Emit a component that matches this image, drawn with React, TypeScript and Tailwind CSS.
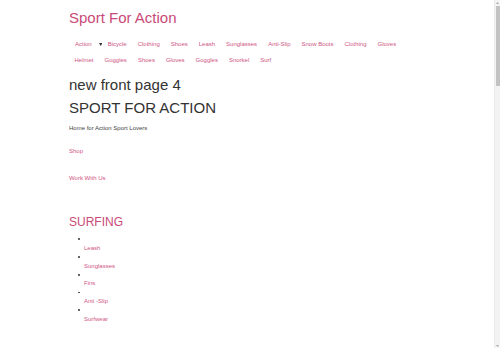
import React from "react";

const navRow1 = ["Bicycle", "Clothing", "Shoes", "Leash", "Sunglasses", "Anti-Slip", "Snow Boots", "Clothing", "Gloves"];
const navRow2 = ["Helmet", "Goggles", "Shoes", "Gloves", "Goggles", "Snorkel", "Surf"];
const surfing = ["Leash", "Sunglasses", "Fins", "Anti -Slip", "Surfwear"];

function NavItem({ label }: { label: string }) {
  return (
    <a href="#" className="px-[5.5px] leading-[16px] text-[#cf5583]">
      {label}
    </a>
  );
}

export default function App() {
  return (
    <div className="flex h-[348px] overflow-hidden bg-white font-['Liberation_Sans',Arial,sans-serif]">
      <main className="flex-1 overflow-hidden">
        <div className="ml-[69px] w-[356px]">
          {/* header */}
          <div className="pt-[8px] text-[15px] leading-[20px] text-[#c94a78]">Sport For Action</div>

          <nav className="mt-[8px] flex flex-wrap text-[6px]">
            <div className="flex items-center pl-[6px] leading-[16px]">
              <a href="#" className="text-[#cf5583]">Action</a>
              <svg className="ml-[7px]" width="3.5" height="3" viewBox="0 0 7 6">
                <path d="M0 0h7L3.5 6z" fill="#333" />
              </svg>
            </div>
            {navRow1.map((l, i) => (
              <NavItem key={"a" + i} label={l} />
            ))}
            {navRow2.map((l, i) => (
              <NavItem key={"b" + i} label={l} />
            ))}
          </nav>

          <h1 className="mt-[7.3px] text-[15px] leading-[20px] text-[#333]">new front page 4</h1>
          <h2 className="mt-[3px] text-[15px] leading-[20px] text-[#333]">SPORT FOR ACTION</h2>
          <p className="mt-[5.8px] text-[6px] leading-[9px] text-[#444]">Home for Action Sport Lovers</p>

          <a href="#" className="mt-[13.9px] block text-[6px] leading-[9px] text-[#cf5583]">Shop</a>
          <a href="#" className="mt-[18px] block text-[6px] leading-[9px] text-[#cf5583]">Work With Us</a>

          <h3 className="mt-[30.6px] text-[12px] leading-[16px] text-[#c94a78]">SURFING</h3>
          <ul className="mt-[5.2px]">
            {surfing.map((s) => (
              <li key={s} className="flex flex-col">
                <div className="flex h-[9px] items-center pl-[9.3px]">
                  <span className="h-[1.6px] w-[1.6px] rounded-full bg-[#333]" />
                </div>
                <a href="#" className="block pl-[15px] text-[6px] leading-[8.75px] text-[#cf5583]">
                  {s}
                </a>
              </li>
            ))}
          </ul>
        </div>
      </main>

      {/* page scrollbar */}
      <aside className="flex w-[6px] flex-col items-center border-l border-[#ececec] bg-[#f3f3f3]">
        <svg className="mt-[1.5px]" width="3" height="2" viewBox="0 0 6 4">
          <path d="M3 0L6 4H0z" fill="#a8a8a8" />
        </svg>
        <div className="mt-[2.5px] h-[80px] w-[4px] bg-[#c2c2c2]" />
        <div className="flex-1" />
        <svg className="mb-[1.5px]" width="3" height="2" viewBox="0 0 6 4">
          <path d="M0 0h6L3 4z" fill="#a8a8a8" />
        </svg>
      </aside>
    </div>
  );
}
